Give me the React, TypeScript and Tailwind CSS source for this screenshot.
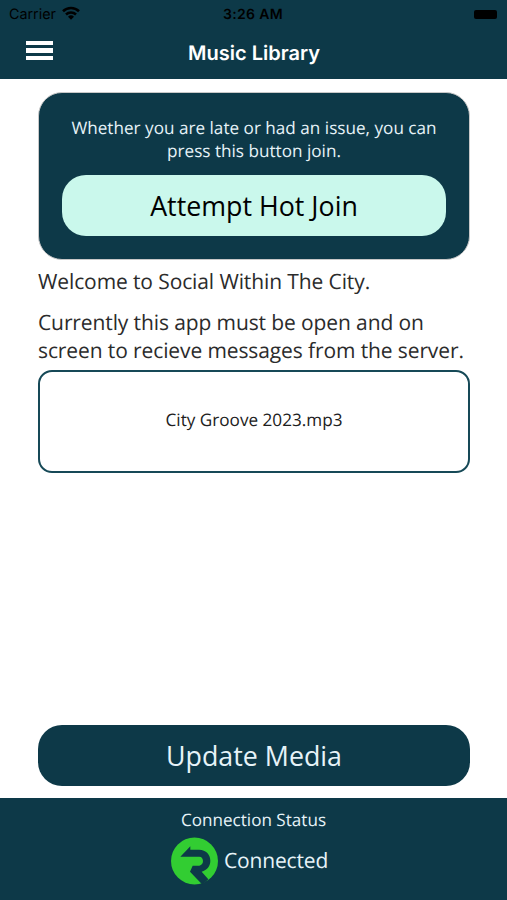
import React from 'react';

function StatusBar() {
    return (
        <div className="grid h-[27px] grid-cols-3 items-center pl-[9px] pr-[10px] font-['Inter',sans-serif] text-[14px] leading-[27px] text-black">
            <div className="flex items-center gap-[6px]">
                <span className="pt-px text-[14.3px]">Carrier</span>
                <svg className="mb-[2px] h-[14px] w-[18px]" viewBox="0 0 18 14" fill="none" stroke="currentColor" strokeWidth="2.6">
                    <path d="M1 5.2a11.6 11.6 0 0 1 16 0" />
                    <path d="M4 8.5a7.3 7.3 0 0 1 10 0" />
                    <path d="M9 13.8 6 10.8a4.3 4.3 0 0 1 6 0Z" fill="currentColor" stroke="none" />
                </svg>
            </div>
            <span className="pt-px text-center font-semibold tracking-[0.3px]">3:26 AM</span>
            <div className="flex justify-end">
                <div className="h-[9px] w-[23px] rounded-[2px] bg-black" />
            </div>
        </div>
    );
}

function Header() {
    return (
        <header className="h-[79px] shrink-0 bg-[#0d3948]">
            <StatusBar />
            <div className="grid h-[52px] grid-cols-[1fr_auto_1fr] items-center px-[26px]">
                <button aria-label="Menu" className="flex w-[27px] flex-col gap-[3px] pb-[5px]">
                    <span className="h-[4.5px] w-full bg-white" />
                    <span className="h-[4.5px] w-full bg-white" />
                    <span className="h-[4.5px] w-full bg-white" />
                </button>
                <h1 className="pl-px font-['Inter',sans-serif] text-[20px] font-semibold text-white">Music Library</h1>
            </div>
        </header>
    );
}

function ConnectedIcon() {
    return (
        <svg className="h-[48px] w-[47px]" viewBox="0 0 141 144">
            <circle cx="70.5" cy="72" r="70.5" fill="#32cd32" />
            <path
                d="M28 59 58 28V38H84C106 38 118 53 118 71C118 87 108 99 92 104L112 127Q104 136 93 142L57 104L65 86H85C92 85 96 79 96 72C96 65 92 59 85 59Z"
                fill="#0d3948"
            />
        </svg>
    );
}

export default function App() {
    return (
        <div className="flex h-[900px] w-[507px] flex-col bg-white font-['Open_Sans',sans-serif] [text-rendering:geometricPrecision]">
            <Header />
            <main className="flex flex-1 flex-col pb-3 pl-[38px] pr-[37px] pt-[13px] text-[#2b2b2b]">
                <section className="h-[168px] rounded-[24px] border border-[#c8c8c8] bg-[#0d3948] px-[23px] pt-[24px] text-center">
                    <p className="whitespace-nowrap text-[17.15px] leading-[23px] text-[#e6f3f8]">
                        Whether you are late or had an issue, you can<br />press this button join.
                    </p>
                    <button className="mt-[12px] h-[61px] w-full rounded-[24px] bg-[#caf8ec] pt-[2px] text-[26.8px] text-black">
                        Attempt Hot Join
                    </button>
                </section>
                <p className="mt-[8px] text-[21px] leading-[29px] tracking-[-0.11px]">Welcome to Social Within The City.</p>
                <p className="mt-[12px] whitespace-nowrap text-[21px] leading-[28px] tracking-[-0.11px]">
                    Currently this app must be open and on<br />screen to recieve messages from the server.
                </p>
                <div className="mt-[5px] flex h-[103px] items-center justify-center rounded-[14px] border-2 border-[#164957] pb-[2px] text-[17.15px] text-[#202020]">
                    City Groove 2023.mp3
                </div>
                <button className="mt-auto h-[61px] rounded-[24px] bg-[#0d3948] pt-[2px] text-[26.8px] text-[#e6f3f8]">
                    Update Media
                </button>
            </main>
            <footer className="flex h-[102px] shrink-0 flex-col items-center bg-[#0d3948] pt-[11px] text-[#e6f3f8]">
                <p className="text-[17.1px] leading-[24px]">Connection Status</p>
                <div className="mt-[4px] flex items-center gap-[6px] pr-[8px]">
                    <ConnectedIcon />
                    <span className="pt-[2px] text-[21px] tracking-[-0.15px]">Connected</span>
                </div>
            </footer>
        </div>
    );
}
